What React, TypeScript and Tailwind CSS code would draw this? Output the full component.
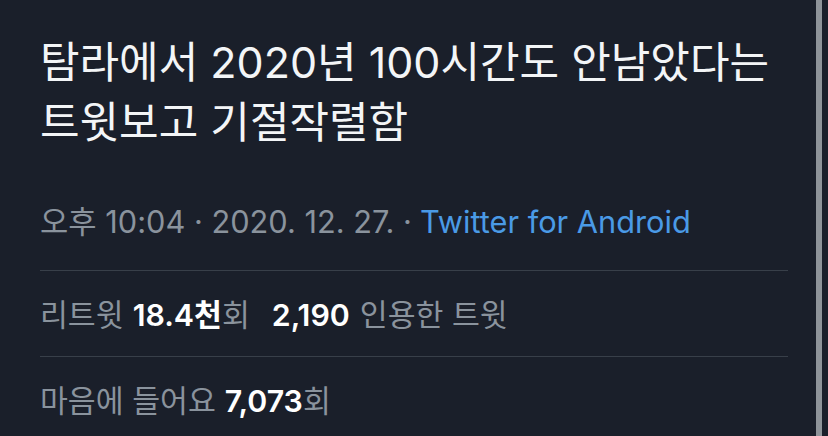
export default function App() {
  return (
    <div
      className="relative w-[828px] h-[436px] overflow-hidden bg-[#1a1f2a] text-white"
      style={{ fontFamily: 'Inter, "Noto Sans CJK KR", "Noto Sans", sans-serif' }}
    >
      <div className="px-[40px] pt-[32px]">
        {/* Tweet body */}
        <p className="text-[43px] leading-[60px] text-[#f3f5f7]">
          탐라에서 2020년 100시간도 안남았다는
          <br />
          트윗보고 기절작렬함
        </p>

        {/* Timestamp + source */}
        <div className="mt-[50px] h-[40px] flex items-center text-[30.75px] text-[#8a939d] border-b border-[#383f49] box-content pb-[28px]">
          <span>오후 10:04 · 2020. 12. 27. · </span>
          <span className="ml-[8px] text-[#4a9ae6]">Twitter for Android</span>
        </div>

        {/* Retweets */}
        <div className="h-[86px] flex items-center text-[30.3px] text-[#8a939d] border-b border-[#383f49] pt-[4px]">
          <span>리트윗</span>
          <span className="ml-[9px] font-semibold text-white">18.4천</span>
          <span>회</span>
          <span className="ml-[22px] font-semibold text-white">2,190</span>
          <span className="ml-[10px]">인용한 트윗</span>
        </div>

        {/* Likes */}
        <div className="h-[86px] flex items-center text-[30.3px] text-[#8a939d] pt-[4px]">
          <span>마음에 들어요</span>
          <span className="ml-[9px] font-semibold text-white">7,073</span>
          <span>회</span>
        </div>
      </div>

      {/* Scrollbar */}
      <div className="absolute top-0 right-[6px] w-[6px] h-full bg-[#8e9399]" />
    </div>
  );
}
